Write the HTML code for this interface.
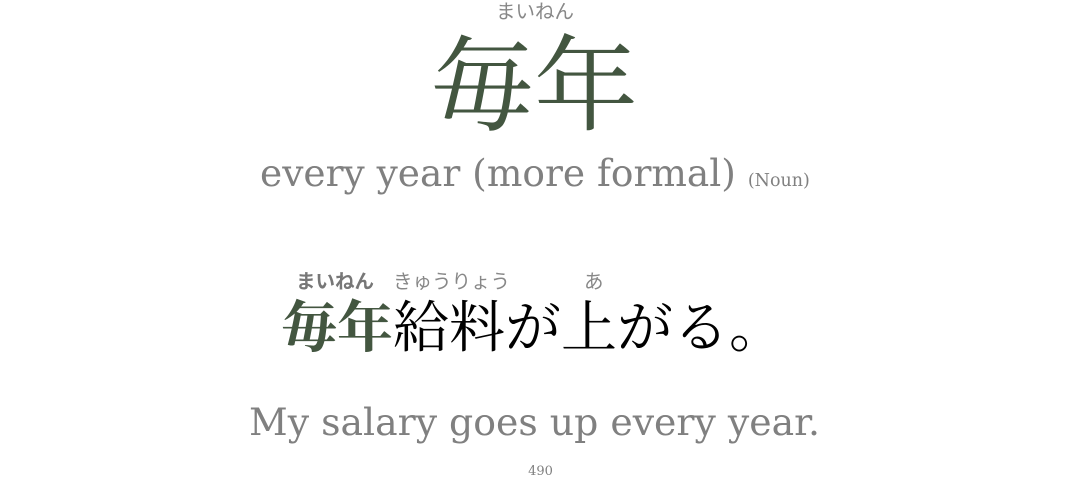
<!DOCTYPE html>
<html><head><meta charset="utf-8"><style>
body{margin:0;width:1071px;height:501px;background:#fff;position:relative;overflow:hidden;font-family:"DejaVu Serif","Noto Serif CJK SC",serif}
.a{position:absolute;white-space:nowrap;line-height:1}
.c{left:0;width:1071px;text-align:center}
.g{color:#808080}
.f{font-family:"Liberation Sans","Noto Sans CJK JP",sans-serif;color:#888;font-size:19.5px}
</style></head><body>
<div class="a f" style="left:496px;top:3px">まいねん</div>
<div class="a" style="left:430px;top:25px;font-size:104px;color:#435640;font-family:'Noto Serif CJK JP','Noto Serif CJK SC',serif">毎年</div>
<div class="a g" style="left:260px;top:155px;font-size:37.5px">every year (more formal) <span style="font-size:17.5px">(Noun)</span></div>

<div class="a f" style="left:296px;top:273px;font-weight:bold;color:#777">まいねん</div>
<div class="a f" style="left:393px;top:273px">きゅうりょう</div>
<div class="a f" style="left:584px;top:273px">あ</div>
<div class="a" style="left:281px;top:296px;font-size:56px;font-family:'Noto Serif CJK JP','Noto Serif CJK SC',serif"><span style="color:#435640;font-weight:bold">毎年</span><span style="color:#000">給料が上がる。</span></div>

<div class="a g" style="left:249px;top:404px;font-size:37.8px">My salary goes up every year.</div>
<div class="a g c" style="top:465px;font-size:13px;left:5px">490</div>
</body></html>
